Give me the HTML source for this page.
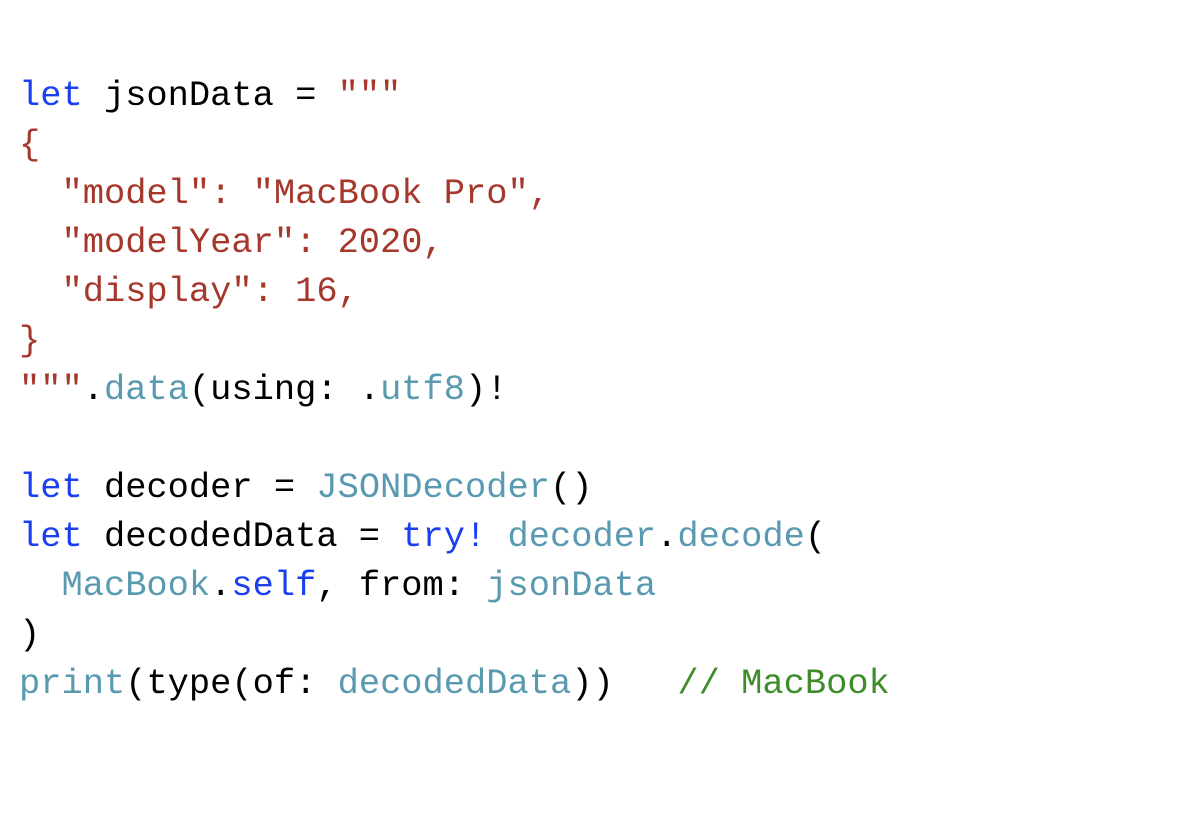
<!DOCTYPE html>
<html><head><meta charset="utf-8"><style>
html,body{margin:0;padding:0;background:#fff;width:1200px;height:818px;overflow:hidden}
pre{position:absolute;left:19px;top:72px;margin:0;font-family:"Liberation Mono","DejaVu Sans Mono",monospace;font-size:35.4px;line-height:49px;color:#000}
.k{color:#1b3ff0}.s{color:#a5372b}.t{color:#5a9ab0}.c{color:#3f8c2c}
</style></head><body>
<pre><span class="k">let</span> jsonData = <span class="s">"""
{
  "model": "MacBook Pro",
  "modelYear": 2020,
  "display": 16,
}
"""</span>.<span class="t">data</span>(using: .<span class="t">utf8</span>)!

<span class="k">let</span> decoder = <span class="t">JSONDecoder</span>()
<span class="k">let</span> decodedData = <span class="k">try!</span> <span class="t">decoder</span>.<span class="t">decode</span>(
  <span class="t">MacBook</span>.<span class="k">self</span>, from: <span class="t">jsonData</span>
)
<span class="t">print</span>(type(of: <span class="t">decodedData</span>))   <span class="c">// MacBook</span></pre>
</body></html>
